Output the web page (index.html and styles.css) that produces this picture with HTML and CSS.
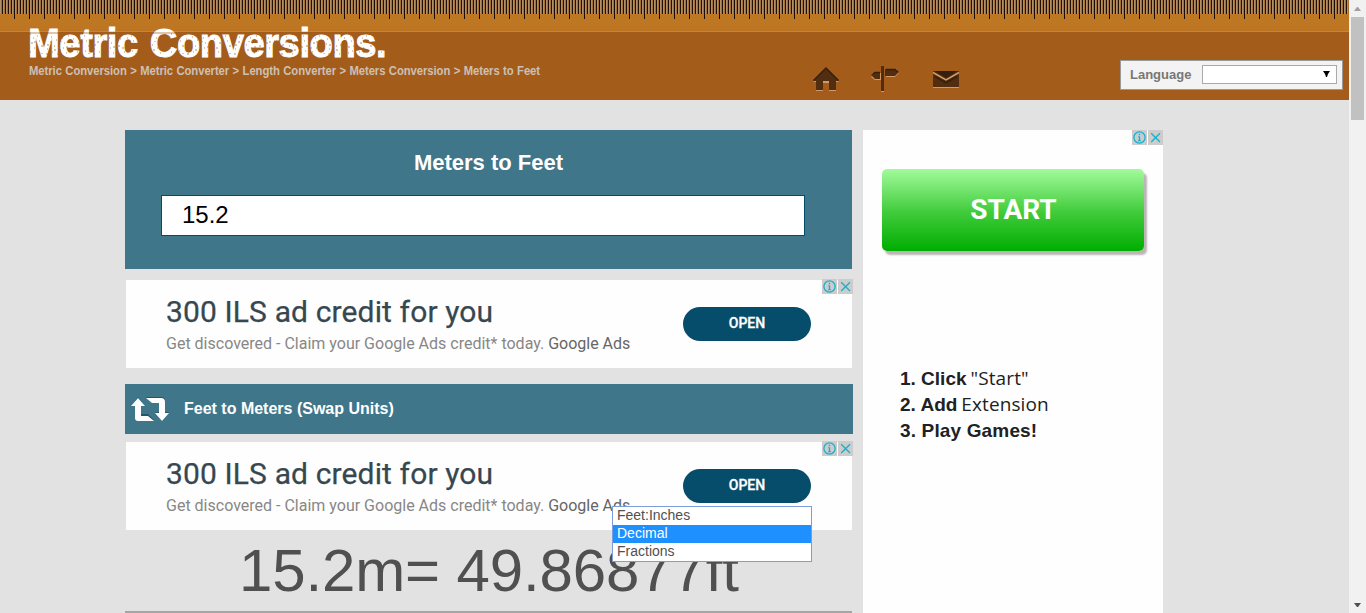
FILE: index.html
```html
<!DOCTYPE html>
<html lang="en">
<head>
<meta charset="utf-8">
<title>Meters to Feet</title>
<link rel="stylesheet" href="styles.css">
</head>
<body>
<svg class="defs" width="0" height="0">
  <symbol id="info" viewBox="0 0 15 15"><circle cx="7.5" cy="7.5" r="5.6"/><path d="M7.5 6.5v4.2M7.5 3.8v1.5M6.4 6.7h1M6.2 10.6h2.6"/></symbol>
  <symbol id="close" viewBox="0 0 15 15"><path d="M3.2 3.2l8.8 8.8M12 3.2l-8.8 8.8"/></symbol>
</svg>
<div class="page">
  <header class="header">
    <div class="ruler"></div>
    <div class="bar">
      <div class="brand">
        <div class="logo"><span class="name">Metric Conversions.</span>
          <svg class="grain" width="360" height="34">
            <defs><pattern id="specks" width="47" height="29" patternUnits="userSpaceOnUse"><path d="M2 7h1M5 11h1M3 16h2M6 21h1M2 25h1M9 9h1M11 14h1M13 19h2M10 24h1M17 12h1M16 17h1M19 22h1M18 27h2M23 10h1M22 15h2M26 19h1M24 25h1M28 13h1M30 18h1M31 23h2M29 27h1M34 11h1M36 16h1M35 21h1M38 26h1M40 9h1M41 14h1M43 19h2M42 24h1M45 12h1M7 14v2M20 17v2M33 14v1M39 19v2M1 20v2M27 22v2M14 26v1"/></pattern></defs>
            <rect y="6" width="360" height="26" fill="url(#specks)"/>
          </svg>
        </div>
        <nav class="crumbs">Metric Conversion &gt; Metric Converter &gt; Length Converter &gt; Meters Conversion &gt; Meters to Feet</nav>
      </div>
      <div class="icons">
        <svg width="28" height="28" viewBox="0 0 28 28"><path class="glow" d="M14 3L1 16h3v9h7v-8h6v8h7v-9h3z"/><path class="ink" d="M14 2L1 15h3v9h7v-9h6v9h7v-9h3z"/><path class="edge" d="M1.5 14.5L14 2l12.5 12.5"/></svg>
        <svg width="30" height="28" viewBox="0 0 30 28"><path class="glow" d="M11 1h3v25h-3zM16 3h10l3 4-4 4H16zM11 7H5l-4 4 4 3h6z"/><path class="ink" d="M11 0h3v25h-3zM15 3h10l4 3-4 4H15zM10 6H5l-4 3 4 4h5z"/><path class="edge" d="M16 3.5h9l3 2.5M3 8l2-1.5h5"/></svg>
        <svg class="mail" width="28" height="28" viewBox="0 0 28 28"><path class="glow" d="M1 6h26v16H1z"/><path class="ink" d="M1 5h26v16H1z"/><path class="dark" d="M3 5h22L14 12z"/><path class="edge" d="M3 10.500l11 6.500 11-6.500"/><path class="fold" d="M1 6.500l13 7.500 13-7.500"/></svg>
      </div>
      <div class="language"><span>Language</span><div class="select"><svg width="7" height="6"><path d="M0 0h7L5 3 4 6H3L2 3z"/></svg></div></div>
    </div>
  </header>
  <main class="content">
    <section class="main">
      <div class="converter"><h1>Meters to Feet</h1><div class="field">15.2</div></div>
      <div class="ad ad-first">
        <div class="copy"><div class="headline">300 ILS ad credit for you</div><div class="desc">Get discovered - Claim your Google Ads credit* today. <b>Google Ads</b></div></div>
        <div class="open">OPEN</div>
        <div class="choices"><svg><use href="#info"/></svg><svg><use href="#close"/></svg></div>
      </div>
      <div class="swap">
        <svg width="38" height="26" viewBox="0 0 38 26"><path class="shade" d="M7 0L0 9h4v11q0 3 3 3h16l-6-6h-7V9h4zM15 0h15q4 0 4 4v11h4l-7 9-7-9h4V6h-7z"/><path fill="#fff" d="M7 1L0 9h4v12q0 3 3 3h16l-6-5h-7V9h4zM15 1h15q4 0 4 4v11h4l-7 8-7-8h4V6h-7z"/></svg>
        <span>Feet to Meters (Swap Units)</span>
      </div>
      <div class="ad ad-second">
        <div class="copy"><div class="headline">300 ILS ad credit for you</div><div class="desc">Get discovered - Claim your Google Ads credit* today. <b>Google Ads</b></div></div>
        <div class="open">OPEN</div>
        <div class="choices"><svg><use href="#info"/></svg><svg><use href="#close"/></svg></div>
        <div class="dropdown"><div>Feet:Inches</div><div class="active">Decimal</div><div>Fractions</div></div>
      </div>
      <div class="result">15.2m= 49.86877ft</div>
    </section>
    <aside class="side">
      <div class="choices"><svg><use href="#info"/></svg><svg><use href="#close"/></svg></div>
      <div class="start">START</div>
      <div class="steps">
        <div><b>1. Click</b><span>"Start"</span></div>
        <div><b>2. Add</b><span>Extension</span></div>
        <div><b class="play">3. Play Games!</b></div>
      </div>
    </aside>
  </main>
</div>
<div class="scrollbar"><svg width="7" height="4"><path fill="#a0a0a0" d="M0 4L3 0h1l3 4z"/></svg><div class="thumb"></div><svg class="down" width="7" height="4"><path fill="#505050" d="M0 0h7L4 4H3z"/></svg></div>
</body>
</html>
```
FILE: styles.css
```css
* { box-sizing: border-box; }
body { margin: 0; width: 1366px; height: 613px; overflow: hidden; display: flex; background: #e2e2e2; font-family: "Liberation Sans", Arial, sans-serif; }
svg { display: block; flex: none; }
.defs { position: absolute; }
.page { width: 1349px; height: 613px; overflow: hidden; }

.header { height: 100px; background: #a35c1a; }
.ruler {
  height: 32px;
  border-bottom: 1px solid #cc8529;
  background:
    repeating-linear-gradient(90deg, transparent 0 14px, #1c0b05 14px 15px) 0 0 / 100% 19px no-repeat,
    repeating-linear-gradient(90deg, #b0906a 0 1px, #a5712f 1px 2px, #241006 2px 3px) 0 0 / 100% 14px no-repeat,
    linear-gradient(#bd7a23, #bd7521);
}
.bar { display: flex; height: 68px; padding-left: 28px; }
.brand { width: 784px; }
.logo { position: relative; height: 31px; margin-top: -5px; line-height: 32px; font-size: 41px; font-weight: bold; color: #fff; white-space: nowrap; }
.name { display: inline-block; letter-spacing: -0.5px; word-spacing: 2px; -webkit-text-stroke: 0.9px #fff; transform: scaleX(.932); transform-origin: 0 0; }
.grain { position: absolute; left: 0; top: 0; fill: none; stroke: #a35c1a; stroke-width: .7; }
.crumbs { margin: 5px 0 0 1px; width: 544px; line-height: 16px; font-size: 12px; font-weight: bold; color: #ccc0b5; white-space: nowrap; transform: scaleX(.939); transform-origin: 0 0; letter-spacing: -.06px; word-spacing: .4px; }
.icons { display: flex; gap: 30px; padding-top: 34px; width: 308px; }
.mail { margin-left: 2px; }
.glow { fill: #cf9a68; }
.ink { fill: #522d10; }
.dark { fill: #35200f; }
.edge { fill: none; stroke: #35200f; stroke-width: 1.500; }
.fold { fill: none; stroke: #d39c68; stroke-width: 1.500; }
.language { display: flex; align-items: center; margin-top: 28px; width: 223px; height: 30px; padding: 0 5px 2px 9px; border: 1px solid #999; background: #f3f3f3; color: #777; font-size: 13px; font-weight: bold; }
.select { display: flex; align-items: center; justify-content: flex-end; margin-left: auto; width: 135px; height: 19px; padding: 0 6px 0; border: 1px solid #aaa; background: #fff; }

.content { display: flex; gap: 10px; padding: 30px 0 0 125px; }
.main { width: 728px; }
.converter { width: 727px; height: 139px; padding: 17px 36px 0; background: #40768a; }
.converter h1 { margin: 0 0 17px; line-height: 31px; font-size: 22px; text-align: center; color: #fff; }
.field { width: 644px; height: 41px; padding-left: 20px; border: 1px solid #044c6c; background: #fff; font-size: 24px; line-height: 38px; color: #000; }
.ad { position: relative; display: flex; width: 726px; height: 88px; margin-left: 1px; padding: 14px 0 0 40px; background: #fffefe; font-family: Roboto, sans-serif; }
.ad-first { margin-top: 11px; }
.ad-second { margin-top: 8px; }
.copy { width: 517px; white-space: nowrap; }
.headline { line-height: 36px; font-size: 30px; letter-spacing: .13px; color: #37474f; -webkit-text-stroke: 0.25px #37474f; }
.desc { margin-top: 4px; line-height: 20px; font-size: 16px; color: #878787; }
.desc b { font-weight: normal; color: #666; }
.open { width: 128px; height: 34px; margin-top: 13px; border-radius: 17px; background: #064d6c; text-align: center; line-height: 33px; font-size: 14px; font-weight: 500; color: #fff; -webkit-text-stroke: 0.3px #fff; }
.choices { position: absolute; top: -1px; right: -1px; display: flex; gap: 1px; }
.choices svg { width: 15px; height: 15px; background: #ccc; fill: none; stroke: #16b0cf; stroke-width: 1.3; }
.swap { display: flex; align-items: center; gap: 15px; height: 50px; margin-top: 16px; padding-left: 6px; background: #40768a; color: #fff; font-size: 16px; font-weight: bold; }
.swap svg { margin-top: 2px; }
.shade { fill: #245568; }
.dropdown { position: absolute; left: 486px; top: 64px; width: 200px; height: 56px; border: 1px solid #7b9ddb; background: #fff; font: 14px/16px "Liberation Sans", Arial, sans-serif; color: #505050; }
.dropdown div { height: 18px; padding-left: 4px; }
.dropdown .active { background: #1e90ff; color: #fff; }
.result { width: 727px; height: 83px; border-bottom: 2px solid #a5a5a5; padding-left: 114px; line-height: 81px; font-size: 60px; letter-spacing: -.13px; color: #505050; white-space: nowrap; }

.side { position: relative; width: 300px; height: 483px; padding: 39px 19px; background: #fffefe; }
.side .choices { top: 0; right: 0; }
.start { width: 262px; height: 82px; padding-left: 1px; border-radius: 5px; background: linear-gradient(#a2fb9c, #42cc3c 52%, #00ad00); box-shadow: 3px 4px 2px #bbb5b8; font: bold 28px/81px Roboto, sans-serif; color: #fff; text-align: center; }
.steps { margin: 115px 0 0 18px; font-size: 19px; line-height: 26px; color: #202124; white-space: nowrap; }
.steps div { display: flex; height: 26px; gap: 4px; }
.steps span { font-family: "Open Sans", sans-serif; font-size: 19px; line-height: 24px; letter-spacing: .1px; }
.play { letter-spacing: .15px; }

.scrollbar { display: flex; flex-direction: column; align-items: center; width: 17px; height: 613px; padding: 7px 0 6px; background: #f1f1f1; }
.thumb { width: 13px; height: 103px; margin-top: 6px; background: #c1c1c1; }
.down { margin-top: auto; }
```
